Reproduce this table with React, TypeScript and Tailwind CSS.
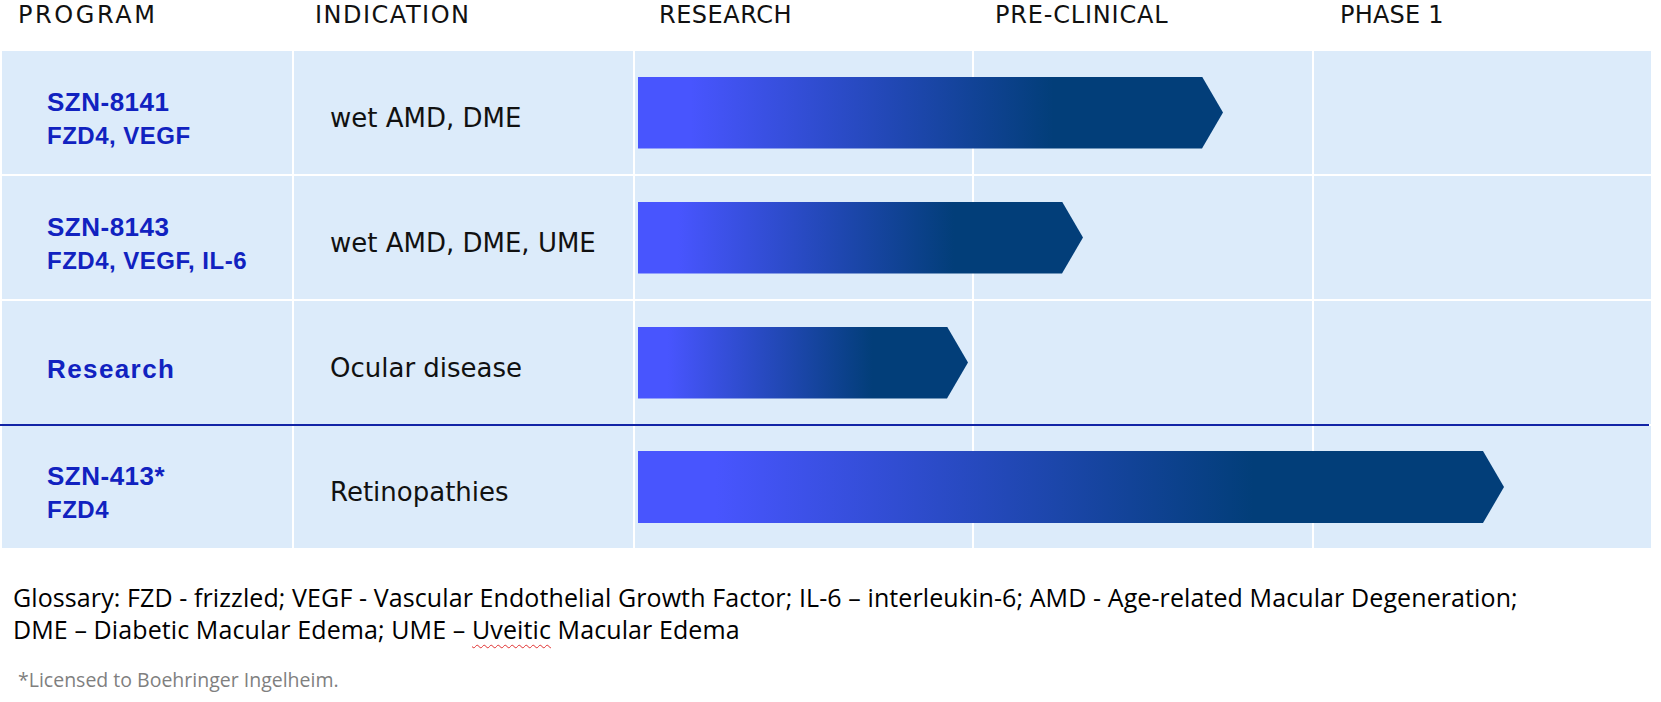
const headers = [
  { label: "PROGRAM", pad: "pl-[16px] tracking-[2.6px]" },
  { label: "INDICATION", pad: "pl-[21px] tracking-[1.5px]" },
  { label: "RESEARCH", pad: "pl-[24px] tracking-[0.5px]" },
  { label: "PRE-CLINICAL", pad: "pl-[21px] tracking-[0.8px]" },
  { label: "PHASE 1", pad: "pl-[26px] tracking-[0.2px]" },
];

// barWidth = length of the arrow in px, from the start of the research column
const programs = [
  { name: "SZN-8141", target: "FZD4, VEGF", indication: "wet AMD, DME", barWidth: 585 },
  { name: "SZN-8143", target: "FZD4, VEGF, IL-6", indication: "wet AMD, DME, UME", barWidth: 445 },
  { name: "Research", target: "", indication: "Ocular disease", barWidth: 330 },
  { name: "SZN-413*", target: "FZD4", indication: "Retinopathies", barWidth: 866 },
];

const gridCols = "grid grid-cols-[290px_339px_337px_338px_337px] gap-x-[2px]";

type Program = (typeof programs)[number];

const Row = ({ p, height }: { p: Program; height: string }) => (
  <div className={`${gridCols} ${height}`}>
    {/* programa */}
    <div className="col-start-1 row-start-1 bg-[#dcebfa] flex flex-col justify-center pl-[45px] pt-[13px] font-['Liberation_Sans',Arial,sans-serif] font-bold text-[#1122c0] tracking-[0.5px]">
      <span className={`text-[26px] leading-[32px] ${p.target ? "" : "tracking-[1.4px]"}`}>{p.name}</span>
      {p.target && <span className="text-[24px] leading-[35px]">{p.target}</span>}
    </div>
    {/* indicación */}
    <div className="col-start-2 row-start-1 bg-[#dcebfa] flex items-center pl-[36px] pt-[10px] text-[26px] leading-[30px] text-[#111] font-['DejaVu_Sans',sans-serif]">
      {p.indication}
    </div>
    <div className="col-start-3 row-start-1 bg-[#dcebfa]" />
    <div className="col-start-4 row-start-1 bg-[#dcebfa]" />
    <div className="col-start-5 row-start-1 bg-[#dcebfa]" />
    {/* barra de progreso */}
    <div
      className="col-start-3 col-end-6 row-start-1 self-center ml-[3px] h-[72px] bg-[linear-gradient(90deg,#4855fe_9%,#2549bc_40%,#023e79_71%)] [clip-path:polygon(0_0,calc(100%_-_21px)_0,100%_50%,calc(100%_-_21px)_100%,0_100%)]"
      style={{ width: p.barWidth }}
    />
  </div>
);

export default function App() {
  return (
    <div className="w-[1661px] h-[702px] bg-white overflow-hidden">
      <div className="pl-[2px]">
        {/* encabezados */}
        <div className={`${gridCols} h-[51px]`}>
          {headers.map((h) => (
            <div
              key={h.label}
              className={`${h.pad} pt-[1px] text-[24px] leading-[28px] text-[#111] font-['DejaVu_Sans',sans-serif] whitespace-nowrap`}
            >
              {h.label}
            </div>
          ))}
        </div>

        <div className="flex flex-col">
          <Row p={programs[0]} height="h-[123px]" />
          <div className="h-[2px]" />
          <Row p={programs[1]} height="h-[123px]" />
          <div className="h-[2px]" />
          <Row p={programs[2]} height="h-[123px]" />
          <div className="h-[2px] w-[1649px] -ml-[2px] bg-[#1224a6]" />
          <Row p={programs[3]} height="h-[122px]" />
        </div>
      </div>

      {/* glosario */}
      <div className="mt-[33px] pl-[13px] text-[25px] leading-[32px] tracking-[0.1px] text-black font-['Open_Sans',sans-serif] whitespace-nowrap">
        <p>
          Glossary: FZD - frizzled; VEGF - Vascular Endothelial Growth Factor; IL-6 – interleukin-6; AMD -
          Age-related Macular Degeneration;
        </p>
        <p>
          DME – Diabetic Macular Edema; UME –{" "}
          <span className="underline decoration-wavy decoration-[#e03030] decoration-1 underline-offset-[5px]">
            Uveitic
          </span>{" "}
          Macular Edema
        </p>
      </div>

      <p className="mt-[23px] pl-[18px] text-[19.5px] leading-[24px] text-[#7f7f7f] font-['Open_Sans',sans-serif]">
        *Licensed to Boehringer Ingelheim.
      </p>
    </div>
  );
}
